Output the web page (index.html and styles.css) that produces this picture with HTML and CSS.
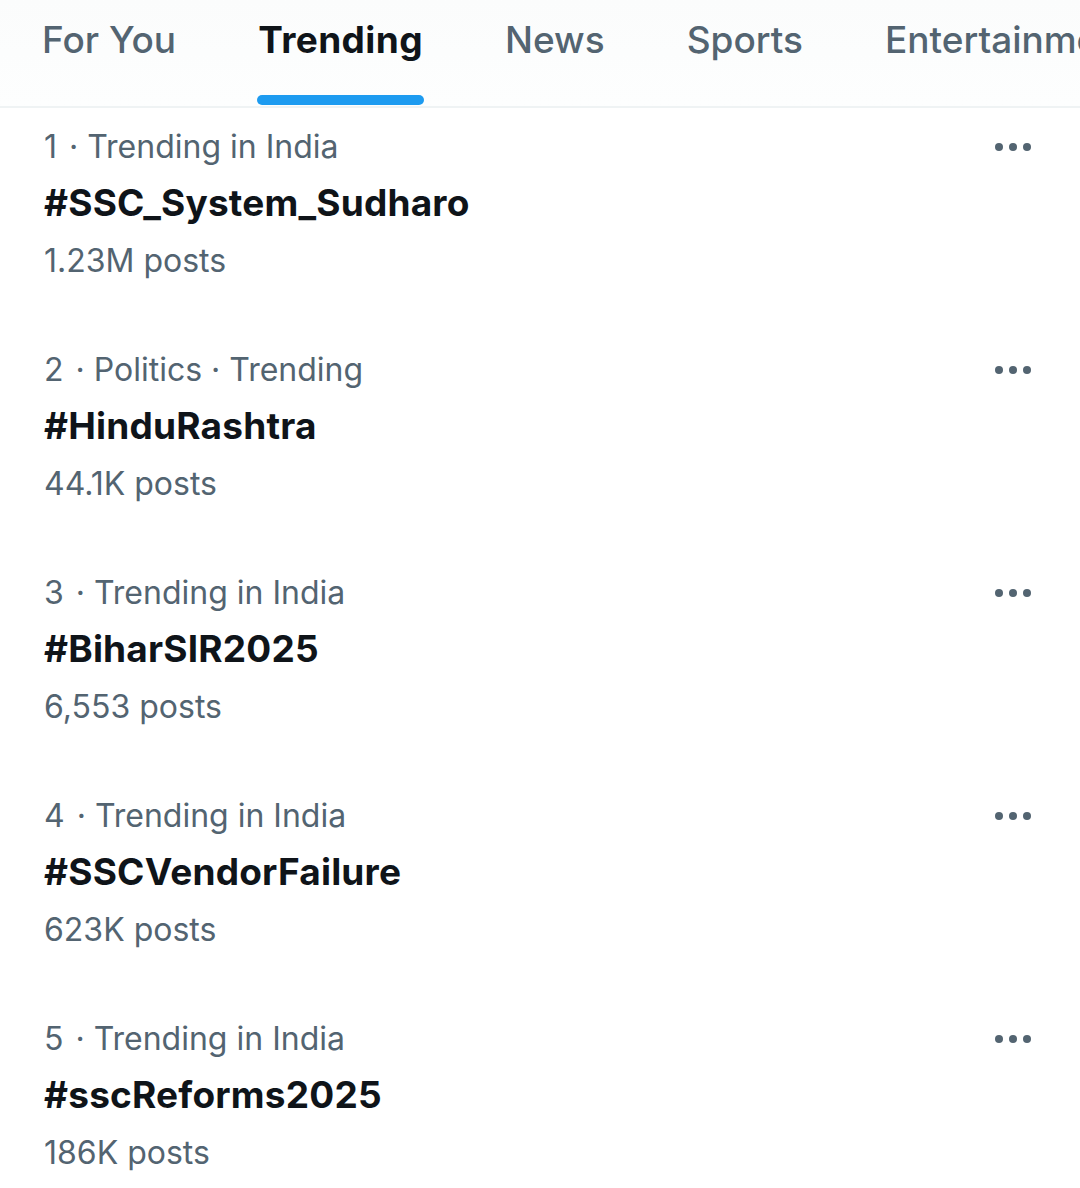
FILE: index.html
```html
<!DOCTYPE html>
<html lang="en">
<head>
    <meta charset="UTF-8">
    <meta name="viewport" content="width=device-width, initial-scale=1.0">
    <title>Explore - Trending</title>
    <link rel="stylesheet" href="styles.css">
</head>
<body>
    <div class="abas">
        <a class="aba">For You</a>
        <a class="aba ativa">Trending</a>
        <a class="aba">News</a>
        <a class="aba">Sports</a>
        <a class="aba">Entertainment</a>
    </div>

    <div class="lista">
        <div class="tendencia">
            <div class="info">
                <div class="meta">1<span class="sep">·</span>Trending in India</div>
                <div class="hashtag">#SSC_System_Sudharo</div>
                <div class="meta">1.23M posts</div>
            </div>
            <button class="mais"><span></span><span></span><span></span></button>
        </div>
        <div class="tendencia">
            <div class="info">
                <div class="meta">2<span class="sep">·</span>Politics · Trending</div>
                <div class="hashtag">#HinduRashtra</div>
                <div class="meta">44.1K posts</div>
            </div>
            <button class="mais"><span></span><span></span><span></span></button>
        </div>
        <div class="tendencia">
            <div class="info">
                <div class="meta">3<span class="sep">·</span>Trending in India</div>
                <div class="hashtag">#BiharSIR2025</div>
                <div class="meta">6,553 posts</div>
            </div>
            <button class="mais"><span></span><span></span><span></span></button>
        </div>
        <div class="tendencia">
            <div class="info">
                <div class="meta">4<span class="sep">·</span>Trending in India</div>
                <div class="hashtag">#SSCVendorFailure</div>
                <div class="meta">623K posts</div>
            </div>
            <button class="mais"><span></span><span></span><span></span></button>
        </div>
        <div class="tendencia">
            <div class="info">
                <div class="meta">5<span class="sep">·</span>Trending in India</div>
                <div class="hashtag">#sscReforms2025</div>
                <div class="meta">186K posts</div>
            </div>
            <button class="mais"><span></span><span></span><span></span></button>
        </div>
    </div>
</body>
</html>
```

FILE: styles.css
```css
* {
    box-sizing: border-box;
    margin: 0;
    padding: 0;
    font-family: 'Inter', 'Noto Sans', sans-serif;
}

body {
    background-color: #fff;
    color: #0f1419;
    width: 1080px;
    overflow: hidden;
}

.abas {
    display: flex;
    gap: 82px;
    padding-left: 42px;
    height: 108px;
    border-bottom: 2px solid #eff3f4;
    background: linear-gradient(to bottom, #fbfcfc, #fdfefe);
    overflow: hidden;
    white-space: nowrap;
}

.aba {
    position: relative;
    font-size: 37px;
    line-height: 80px;
    color: #536471;
    font-weight: 500;
    flex-shrink: 0;
}

.aba.ativa {
    color: #0f1419;
    font-weight: 700;
    letter-spacing: 0.4px;
}

.aba.ativa::after {
    content: "";
    position: absolute;
    left: -1px;
    right: -1px;
    top: 95px;
    height: 10px;
    border-radius: 5px;
    background-color: #1d9bf0;
}

.lista {
    padding-top: 11px;
}

.tendencia {
    display: flex;
    justify-content: space-between;
    align-items: flex-start;
    padding: 0 49px 55px 44px;
}

.meta {
    font-size: 32px;
    line-height: 56px;
    color: #536471;
}

.meta:last-child {
    margin-top: 2px;
    margin-bottom: -2px;
}

.sep {
    margin: 0 9px 0 12px;
}

.hashtag {
    font-size: 37px;
    line-height: 56px;
    font-weight: 700;
    color: #0f1419;
    letter-spacing: 0.2px;
}

.mais {
    display: flex;
    gap: 6px;
    align-items: center;
    height: 56px;
    border: none;
    background: none;
}

.mais span {
    width: 8px;
    height: 8px;
    border-radius: 50%;
    background-color: #536471;
}
```
